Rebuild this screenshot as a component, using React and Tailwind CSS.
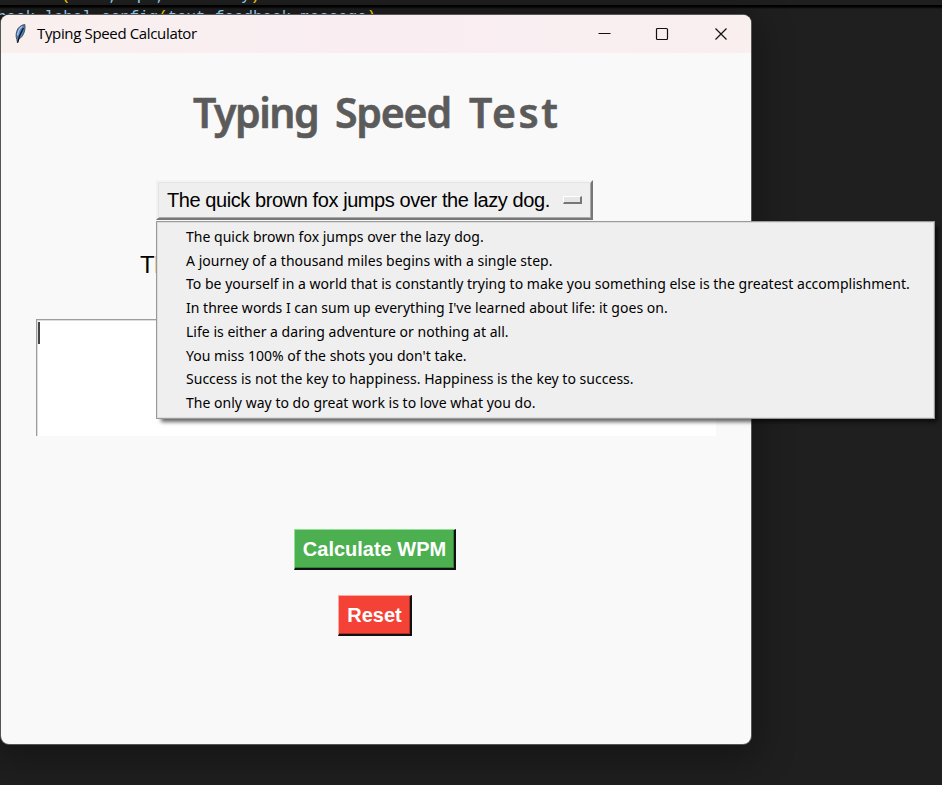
const SENTENCES = [
  "The quick brown fox jumps over the lazy dog.",
  "A journey of a thousand miles begins with a single step.",
  "To be yourself in a world that is constantly trying to make you something else is the greatest accomplishment.",
  "In three words I can sum up everything I've learned about life: it goes on.",
  "Life is either a daring adventure or nothing at all.",
  "You miss 100% of the shots you don't take.",
  "Success is not the key to happiness. Happiness is the key to success.",
  "The only way to do great work is to love what you do.",
];

function Feather() {
  return (
    <svg width="14" height="22" viewBox="0 0 14 22" className="shrink-0">
      <path d="M11.8 1.500C8 2 4.800 4.500 3.700 8.500c-.9 3-.7 6 .2 8l.6 3.500 1.100-3.700c2.600-1.500 4.800-4 5.600-7.300.8-2.700 1-5.500.6-7.500z" fill="#4a80c4" stroke="#4b5058" strokeWidth="1" />
      <path d="M9.300 3.500C6.500 5.500 4.900 8.500 4.600 12.500" fill="none" stroke="#b4cbe6" strokeWidth="1.200" />
      <path d="M10.500 5C8.500 8.500 6 12 4.700 19.500" fill="none" stroke="#101722" strokeWidth="1.300" />
    </svg>
  );
}

function TitleBar() {
  return (
    <header className="flex h-[38px] shrink-0 items-center bg-gradient-to-r from-[#f9f0ee] via-[#f9edf2] to-[#f9efef] pb-px pl-3">
      <Feather />
      <span className="ml-[10px] w-[180px] whitespace-nowrap font-['Segoe_UI','Open_Sans',sans-serif] text-[15px] tracking-[-0.35px] text-black">
        Typing Speed Calculator
      </span>
      <svg width="130" height="14" viewBox="0 0 130 14" className="ml-auto mr-[23px] mt-px" fill="none" stroke="#111">
        <path d="M0.500 6.500h12" />
        <rect x="58.500" y="1.500" width="11" height="11" rx="1" strokeWidth="1.200" />
        <path d="M117.500 1.500l11 11M128.500 1.500l-11 11" strokeWidth="1.200" />
      </svg>
    </header>
  );
}

function OptionMenu() {
  return (
    <div className="absolute left-1/2 top-full z-10 ml-[-220px] mt-[1px] flex h-[198px] w-[779px] flex-col border border-[#9a9a9a] bg-[#efefef] pb-[3px] pl-[29px] pt-[3px] shadow-[inset_0_0_0_1px_#ddd,4px_4px_4px_-1px_rgba(0,0,0,0.6)]">
      {SENTENCES.map((s) => (
        <div key={s} className="flex flex-1 items-center whitespace-nowrap font-['Segoe_UI','Noto_Sans',sans-serif] text-[14px] leading-none tracking-[0.02px] text-black">
          <span>{s}</span>
        </div>
      ))}
    </div>
  );
}

export default function App() {
  return (
    <main className="relative h-[785px] w-[942px] overflow-hidden bg-[#1f1f1f]">
      <div className="h-[15px] overflow-hidden whitespace-pre font-['Liberation_Mono',monospace] text-[15.8px] text-[#9cdcfe]">
        <div className="h-[5px] overflow-hidden">
          <div className="-mt-[14px] ml-[61px] leading-[20px]">
            <span className="text-[#ffd700]">(</span>text, wpm, accuracy<span className="text-[#ffd700]">)</span>
          </div>
        </div>
        <div className="h-[10px] overflow-hidden bg-gradient-to-b from-black to-[#1f1f1f] to-40%">
          <div className="-ml-[3px] leading-[26px]">
            back_label.config<span className="text-[#ffd700]">(</span>text<span className="text-[#d4d4d4]">=</span>feedback_message<span className="text-[#ffd700]">)</span>
          </div>
        </div>
      </div>
      <section className="relative z-10 ml-px flex h-[729px] w-[750px] flex-col rounded-lg bg-[#f9f9f9] shadow-[0_0_0_1px_#555,0_10px_36px_8px_rgba(0,0,0,0.3)]">
        <div className="overflow-hidden rounded-t-lg">
          <TitleBar />
        </div>
        <h1 className="ml-[192px] mt-[31px] flex h-[56px] items-center whitespace-nowrap font-['Comic_Sans_MS','Noto_Sans',sans-serif] text-[41px] font-semibold leading-none text-[#5b5b5b] [-webkit-text-stroke:0.6px_#5b5b5b] [stroke-linejoin:round]">
          <span className="w-[142px] tracking-[-1.5px]">Typing</span>
          <span className="w-[134px] tracking-[-1.2px]">Speed</span>
          <span className="tracking-[2.5px]">Test</span>
        </h1>
        <div className="relative mt-[40px] flex justify-center pr-[3px]">
          <button className="flex h-[40px] w-[437px] items-center whitespace-nowrap border-2 border-b-[#777] border-l-[#f2f2f2] border-r-[#777] border-t-[#f5f5f5] bg-[#efefef] pl-[9px] text-left font-['Liberation_Sans',Arial,sans-serif] text-[20px] text-black shadow-[inset_1px_1px_0_#e3e3e3,inset_-1px_-1px_0_#aaa]">
            <span className="w-[396px] tracking-[-0.42px]">The quick brown fox jumps over the lazy dog.</span>
            <span className="h-[8px] w-[19px] border-b-2 border-l border-r-2 border-t border-b-[#777] border-l-white border-r-[#777] border-t-white bg-[#e6e6e6]" />
          </button>
          <OptionMenu />
        </div>
        <p className="ml-[139px] mt-[30px] h-[30px] font-['Liberation_Sans',Arial,sans-serif] text-[24px] leading-[30px] tracking-[-0.5px] text-black">Th</p>
        <div className="ml-[35px] mt-[39px] h-[117px] w-[680px] border-l border-t border-[#9d9d9d] bg-white pl-[1px] pt-[2px] shadow-[inset_1px_1px_0_#ddd]">
          <div className="h-[22px] w-[2px] bg-[#444]" />
        </div>
        <div className="mt-[93px] flex flex-col items-center gap-[25px] pr-[2px] font-['Liberation_Sans',Arial,sans-serif] text-[20px] font-bold leading-none text-white">
          <button className="h-[41px] w-[162px] whitespace-nowrap border-b-2 border-l border-r-2 border-t border-b-[#111] border-l-[#8ee292] border-r-[#111] border-t-[#8ee292] bg-[#4caf50] shadow-[inset_-1px_-1px_0_#37803a]">Calculate WPM</button>
          <button className="h-[41px] w-[74px] border-b-2 border-l border-r-2 border-t border-b-[#111] border-l-[#ffa8a0] border-r-[#111] border-t-[#ffa8a0] bg-[#f44336] shadow-[inset_-1px_-1px_0_#b03028]">Reset</button>
        </div>
      </section>
    </main>
  );
}
